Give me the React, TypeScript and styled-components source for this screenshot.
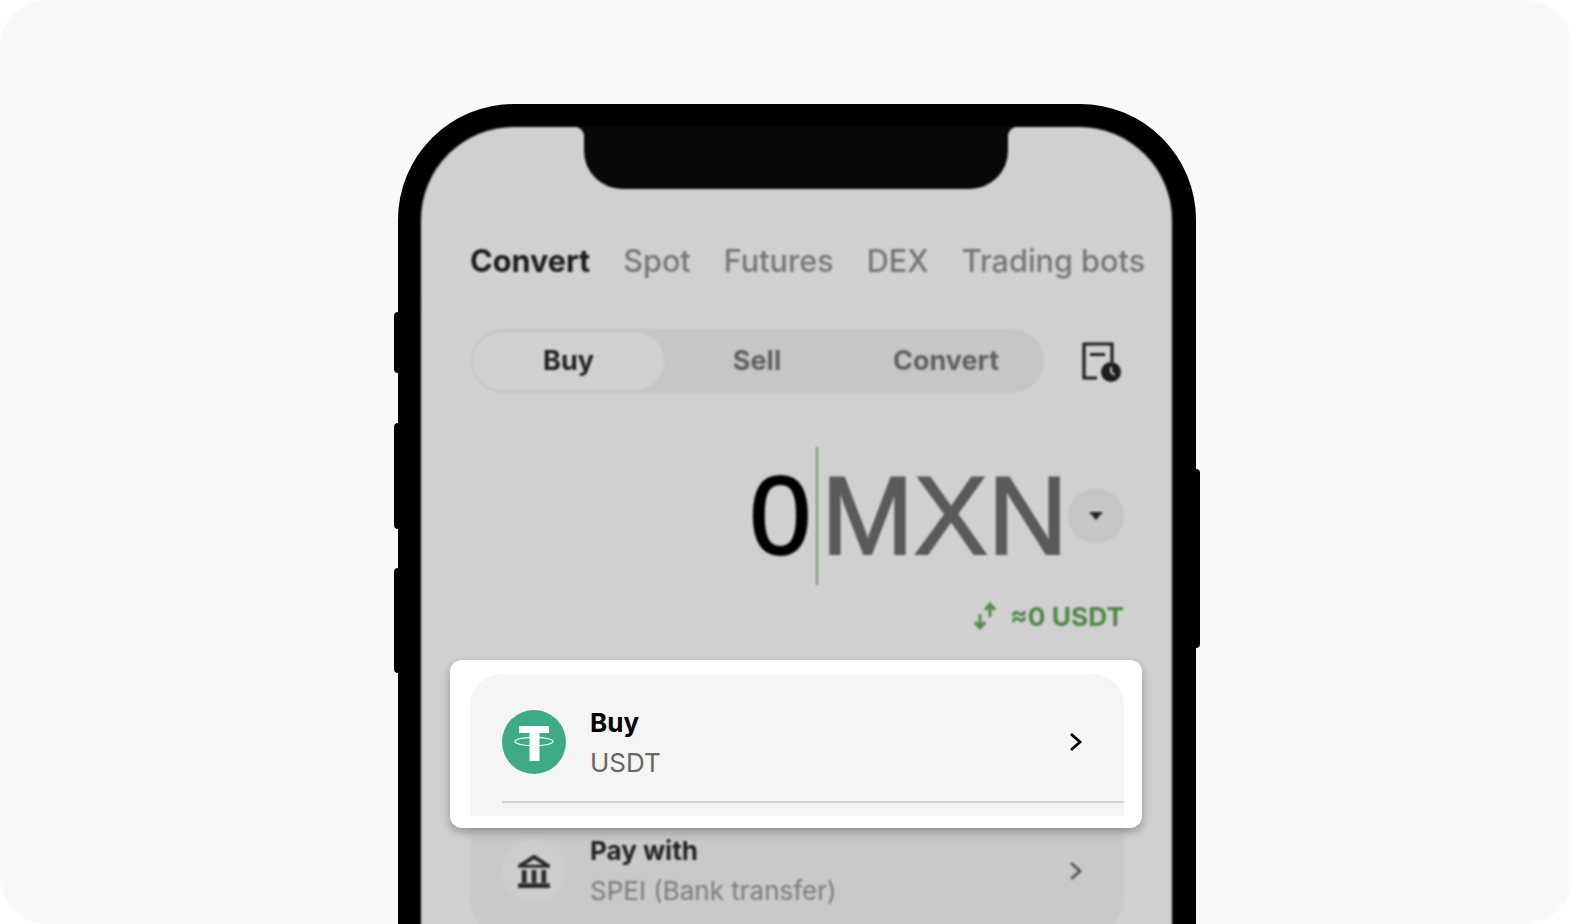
import styled, { createGlobalStyle } from 'styled-components';

const GlobalStyle = createGlobalStyle`
  html, body {
    margin: 0;
    background: #fff;
    font-family: Inter, "Liberation Sans", sans-serif;
  }
`;

function TetherLogo() {
  return (
    <svg width="64" height="64" viewBox="0 0 64 64">
      <circle cx="32" cy="32" r="32" fill="#3eab85" />
      <path d="M17 16h30v7H37.5v28h-10V23H17z" fill="#fff" />
      <ellipse cx="32" cy="31.5" rx="19" ry="4.2" fill="none" stroke="#fff" strokeWidth="1.2" />
    </svg>
  );
}

function BankIcon() {
  return (
    <svg width="36" height="36" viewBox="0 0 34 34">
      <path d="M17 1.5 L32 11 V14 H2 V11 Z" fill="#2b2b2b" />
      <path d="M17 6 L25 11 H9 Z" fill="#cdcdcd" />
      <path d="M5.5 16h4.5v12H5.5zM14.8 16h4.5v12h-4.5zM24 16h4.5v12H24z" fill="#2b2b2b" />
      <path d="M2 28.5h30v4.5H2z" fill="#2b2b2b" />
    </svg>
  );
}

function HistoryIcon() {
  return (
    <HistorySvg width="42" height="42" viewBox="0 0 42 42">
      <path d="M17 37H4V3h28v18" fill="none" stroke="#1d1d1d" strokeWidth="3.2" />
      <path d="M10 12h15v3H10z" fill="#1d1d1d" />
      <circle cx="31" cy="31" r="10" fill="#1d1d1d" />
      <path d="M31 26v5l3.5 3" fill="none" stroke="#cfcfcf" strokeWidth="2" />
    </HistorySvg>
  );
}

function SwapIcon() {
  return (
    <svg width="24" height="28" viewBox="0 0 24 28">
      <path
        d="M7 12v13M2 20l5 6 5-6M17 15V3M12 8l5-6 5 6"
        fill="none"
        stroke="#4f8549"
        strokeWidth="2.8"
      />
    </svg>
  );
}

function Chevron({ color }: { color: string }) {
  return (
    <svg width="14" height="20" viewBox="0 0 14 20">
      <path d="M2 2l9 8-9 8" fill="none" stroke={color} strokeWidth="2.8" />
    </svg>
  );
}

export default function App() {
  return (
    <>
      <GlobalStyle />
      <Panel>
        <Phone>
          <SideButton $top={208} $height={61} />
          <SideButton $top={319} $height={106} />
          <SideButton $top={464} $height={105} />
          <SideButton $right $top={365} $height={179} />
          <Screen>
            <Notch />
            <Tabs>
              <Tab $active>Convert</Tab>
              <Tab>Spot</Tab>
              <Tab>Futures</Tab>
              <Tab>DEX</Tab>
              <Tab>Trading bots</Tab>
            </Tabs>
            <Toolbar>
              <Segments>
                <Segment $active>Buy</Segment>
                <Segment>Sell</Segment>
                <Segment>Convert</Segment>
              </Segments>
              <HistoryIcon />
            </Toolbar>
            <AmountRow>
              <Amount>0</Amount>
              <Caret />
              <Currency>MXN</Currency>
              <CurrencyButton>
                <DownTriangle />
              </CurrencyButton>
            </AmountRow>
            <ConvertedRow>
              <SwapIcon />
              <span>≈0 USDT</span>
            </ConvertedRow>
            <OrderCard>
              <OrderRow>
                <TetherLogo />
                <RowText>
                  <RowTitle>Buy</RowTitle>
                  <RowValue>USDT</RowValue>
                </RowText>
                <Chevron color="#333" />
              </OrderRow>
              <OrderRow>
                <IconCircle>
                  <BankIcon />
                </IconCircle>
                <RowText>
                  <RowTitle>Pay with</RowTitle>
                  <RowValue>SPEI (Bank transfer)</RowValue>
                </RowText>
                <Chevron color="#555" />
              </OrderRow>
            </OrderCard>
          </Screen>
          <Highlight>
            <HighlightInner>
              <OrderRow $sharp>
                <TetherLogo />
                <RowText $sharp>
                  <RowTitle $sharp>Buy</RowTitle>
                  <RowValue $sharp>USDT</RowValue>
                </RowText>
                <Chevron color="#000" />
              </OrderRow>
            </HighlightInner>
          </Highlight>
        </Phone>
      </Panel>
    </>
  );
}

const Panel = styled.div`
  box-sizing: border-box;
  width: 1572px;
  height: 924px;
  padding: 104px 0 0 398px;
  background: #f9f9f9;
  border-radius: 48px;
  overflow: hidden;
`;

const Phone = styled.div`
  position: relative;
  box-sizing: border-box;
  width: 798px;
  height: 920px;
  padding: 23px 24px 0 23px;
  background: #000;
  border-radius: 116px 116px 0 0;
`;

const SideButton = styled.div<{ $top: number; $height: number; $right?: boolean }>`
  position: absolute;
  top: ${(p) => p.$top}px;
  ${(p) => (p.$right ? 'right: -4px;' : 'left: -4px;')}
  width: 4px;
  height: ${(p) => p.$height}px;
  background: #000;
  border-radius: ${(p) => (p.$right ? '0 4px 4px 0' : '4px 0 0 4px')};
`;

const Screen = styled.div`
  position: relative;
  height: 100%;
  background: #d0d0d0;
  border-radius: 93px 93px 0 0;
  overflow: hidden;
  filter: blur(1.3px);
`;

const Notch = styled.div`
  position: absolute;
  top: 0;
  left: 163px;
  width: 424px;
  height: 62px;
  background: #080808;
  border-radius: 0 0 38px 38px;

  &::before,
  &::after {
    content: '';
    position: absolute;
    top: 0;
    width: 10px;
    height: 10px;
  }

  &::before {
    left: -10px;
    background: radial-gradient(circle at 0 100%, transparent 10px, #080808 10.5px);
  }

  &::after {
    right: -10px;
    background: radial-gradient(circle at 100% 100%, transparent 10px, #080808 10.5px);
  }
`;

const Tabs = styled.div`
  display: flex;
  gap: 33px;
  height: 50px;
  padding: 109px 0 17px 49px;
  border-bottom: 1px solid #cdcdcd;
  white-space: nowrap;
`;

const Tab = styled.div<{ $active?: boolean }>`
  font-size: 30.6px;
  line-height: 50px;
  font-weight: ${(p) => (p.$active ? 700 : 500)};
  color: ${(p) => (p.$active ? '#1c1c1c' : '#757575')};
`;

const Toolbar = styled.div`
  display: flex;
  align-items: center;
  gap: 36px;
  margin-top: 25px;
  padding-left: 50px;
`;

const HistorySvg = styled.svg`
  margin-top: 2px;
`;

const Segments = styled.div`
  box-sizing: border-box;
  display: grid;
  grid-template-columns: 191px 186px 1fr;
  width: 573px;
  height: 64px;
  padding: 3px 2px;
  background: #c6c6c6;
  border-radius: 32px;
`;

const Segment = styled.div<{ $active?: boolean }>`
  display: flex;
  align-items: center;
  justify-content: center;
  padding-bottom: 2px;
  font-size: 27px;
  font-weight: 700;
  color: ${(p) => (p.$active ? '#222' : '#5f5f5f')};
  background: ${(p) => (p.$active ? '#d0d0d0' : 'transparent')};
  border-radius: 29px;
`;

const AmountRow = styled.div`
  display: flex;
  align-items: center;
  justify-content: flex-end;
  height: 138px;
  margin-top: 54px;
  padding-right: 48px;
  font-family: "Liberation Sans", Arial, sans-serif;
  font-size: 111px;
  line-height: 138px;
  -webkit-text-stroke: 2px currentColor;
`;

const Amount = styled.span`
  color: #000;
`;

const Caret = styled.div`
  width: 2px;
  height: 138px;
  margin: 0 3px 0 5px;
  background: #6b9b64;
`;

const Currency = styled.span`
  color: #5a5a5a;
`;

const CurrencyButton = styled.div`
  display: flex;
  align-items: center;
  justify-content: center;
  width: 56px;
  height: 56px;
  background: #c6c6c6;
  border-radius: 50%;
`;

const DownTriangle = styled.div`
  width: 0;
  height: 0;
  border-left: 7px solid transparent;
  border-right: 7px solid transparent;
  border-top: 8px solid #222;
`;

const ConvertedRow = styled.div`
  display: flex;
  align-items: center;
  justify-content: flex-end;
  gap: 13px;
  height: 34px;
  margin-top: 14px;
  padding-right: 48px;
  font-size: 26.3px;
  font-weight: 700;
  color: #4f8549;
`;

const OrderCard = styled.div`
  margin: 41px 48px 0 49px;
  height: 258px;
  background: #c9c9c9;
  border-radius: 32px;
`;

const OrderRow = styled.div<{ $sharp?: boolean }>`
  box-sizing: border-box;
  display: flex;
  align-items: center;
  gap: 24px;
  height: 129px;
  padding: 9px 41px 0 0;
  margin-left: 32px;
  border-bottom: 2px solid ${(p) => (p.$sharp ? '#d4d4d4' : '#b8b8b8')};
`;

const IconCircle = styled.div`
  display: flex;
  align-items: center;
  justify-content: center;
  width: 64px;
  height: 64px;
  background: #cdcdcd;
  border-radius: 50%;
`;

const RowText = styled.div<{ $sharp?: boolean }>`
  flex: 1;
  display: flex;
  flex-direction: column;
  gap: 6px;
  padding-top: ${(p) => (p.$sharp ? 2 : 0)}px;
`;

const RowTitle = styled.div<{ $sharp?: boolean }>`
  font-size: 26px;
  line-height: 34px;
  font-weight: 700;
  color: ${(p) => (p.$sharp ? '#000' : '#222')};
`;

const RowValue = styled.div<{ $sharp?: boolean }>`
  font-size: 26px;
  line-height: 34px;
  color: ${(p) => (p.$sharp ? '#666' : '#7a7a7a')};
`;

const Highlight = styled.div`
  position: absolute;
  top: 556px;
  left: 52px;
  box-sizing: border-box;
  width: 692px;
  height: 168px;
  padding: 14px 18px 12px 20px;
  background: #fff;
  border-radius: 12px;
  box-shadow: 0 4px 10px rgba(0, 0, 0, 0.3);
`;

const HighlightInner = styled.div`
  height: 142px;
  background: #f5f5f5;
  border-radius: 32px 32px 0 0;
`;
